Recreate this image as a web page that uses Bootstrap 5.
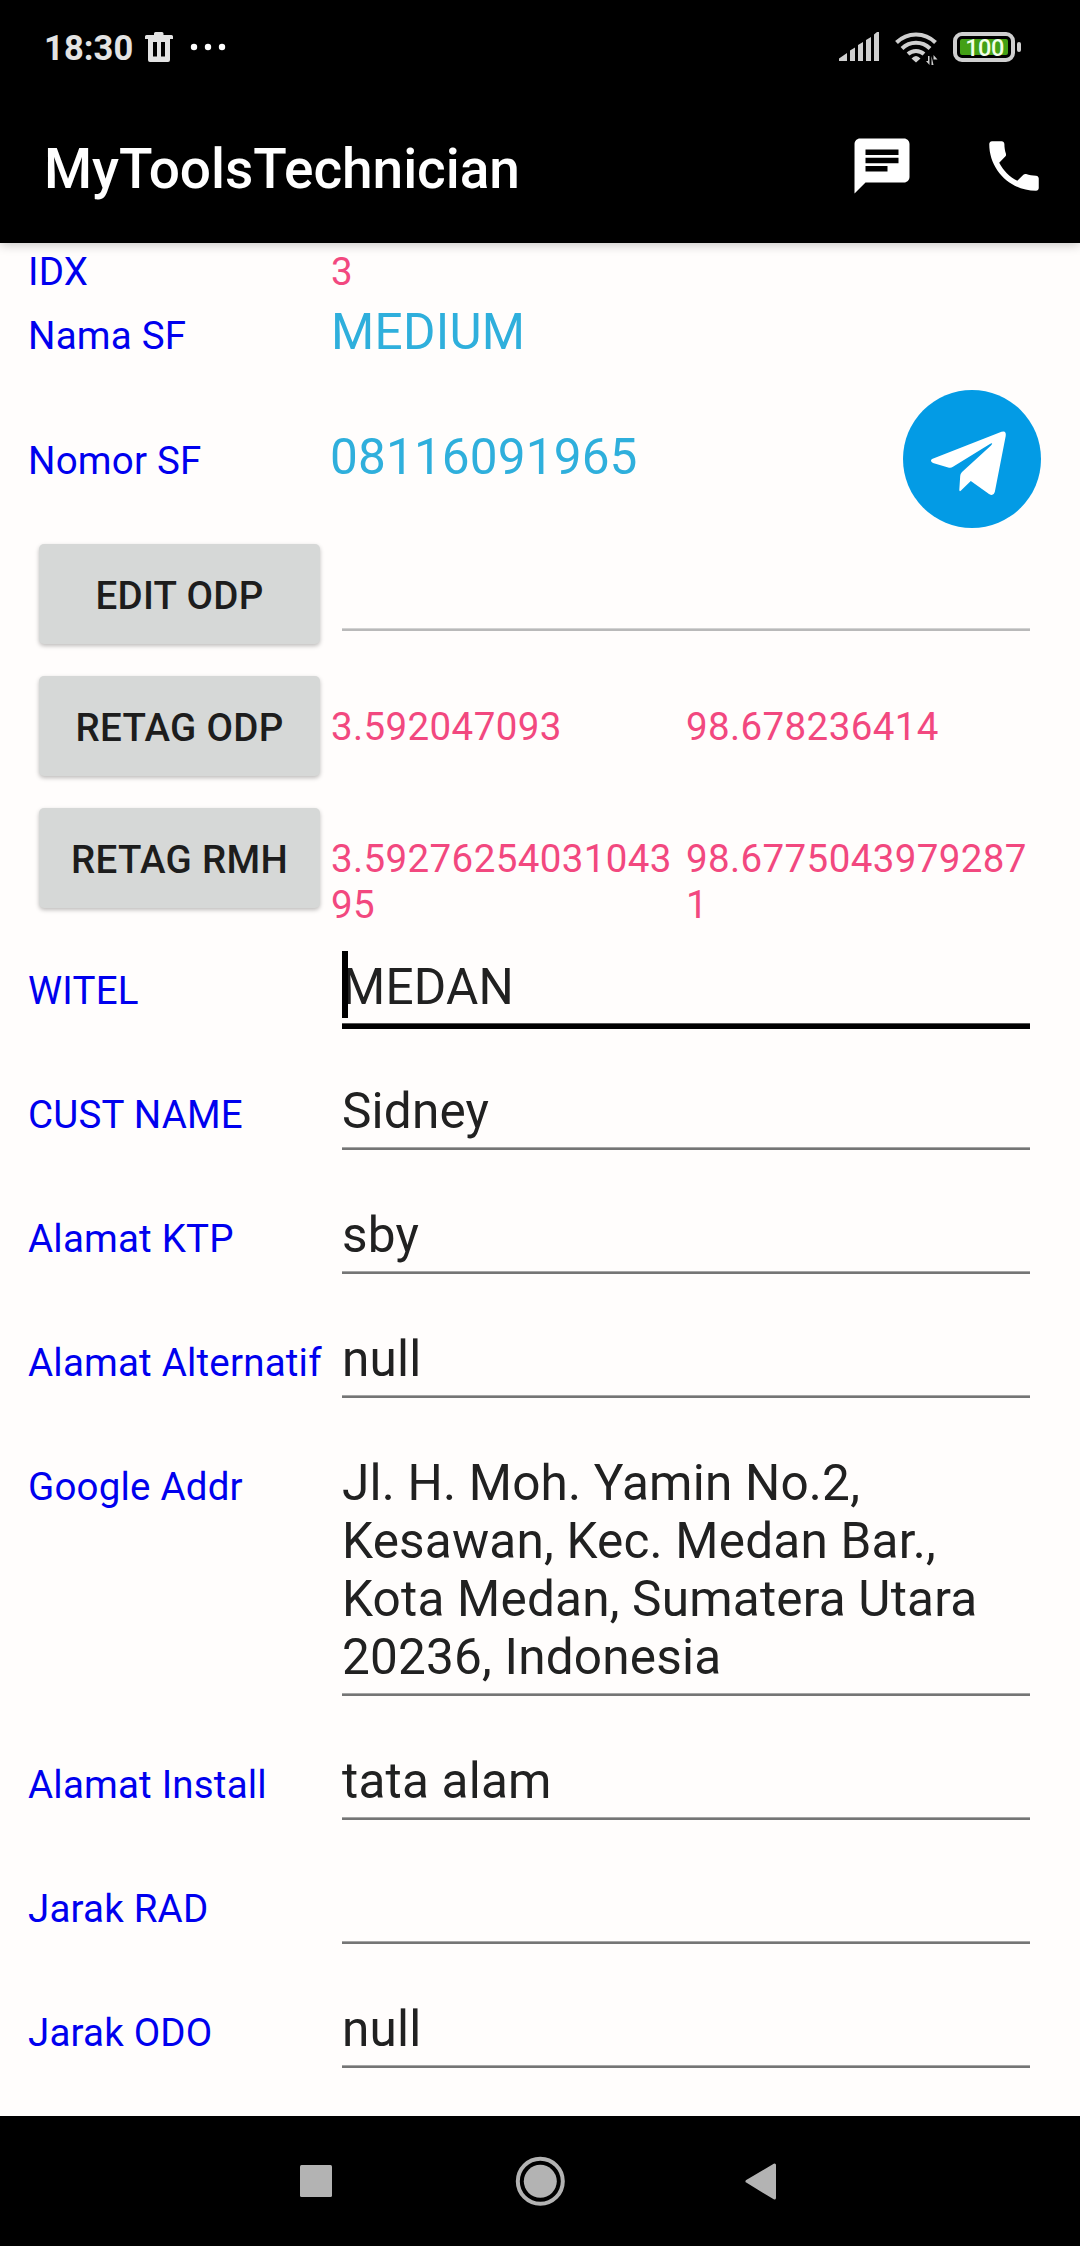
<!DOCTYPE html>
<html lang="id">
<head>
<meta charset="utf-8">
<meta name="viewport" content="width=device-width, initial-scale=1">
<title>MyToolsTechnician</title>
<link href="https://cdn.jsdelivr.net/npm/bootstrap@5.3.0/dist/css/bootstrap.min.css" rel="stylesheet">
<style>
body{font-family:Roboto,"Noto Sans",sans-serif;background:#fffdfc;width:1080px;height:2246px;overflow:hidden;font-size:38.5px;line-height:45px;color:#212121}
svg{display:block;flex:none}
.status-strip{height:90px;padding:0 59px 0 44px;background:#000;color:#e3e3e3}
.clock{font-size:34.5px;font-weight:700;line-height:40px;padding-top:28px;width:101px;letter-spacing:.1px}
.app-bar{height:153px;background:#000;color:#fff;padding:0 33px 0 44px;box-shadow:0 2px 10px rgba(0,0,0,.22);position:relative;z-index:1}
.app-title{font-size:55px;font-weight:500;line-height:64px;padding-top:47px;letter-spacing:-.06px}
.bar-icons{padding-top:43px;gap:66px}
.screen{height:1873px}
.form-line{padding-left:28px}
.field-name{width:303px;color:#00e;flex:none;white-space:nowrap;letter-spacing:.2px}
.pink{color:#f2487f;letter-spacing:.38px}
.sky{color:#2fafdc;font-size:49.5px;line-height:58px;letter-spacing:.28px}
.sky-number{letter-spacing:.14px;margin-left:-1px}
.coord{width:355px;line-height:46px;word-break:break-all;padding:44px 8px 0 0}
.r-idx{height:64px;padding-top:6px}
.r-nama{height:87px;margin-top:-4px}
.r-nomor{height:138px;padding-right:39px}
.nomor-text{padding-top:38px}
.r-btn{height:132px}
.r-last{height:145px}
.btn-col{width:303px;padding:16px 11px;flex:none}
.btn-droid{height:100px;border:0;border-radius:5px;background:#d6d8d7;color:#1d1d1d;font-size:38.5px;font-weight:500;line-height:45px;padding:2px 0 0;letter-spacing:.32px;box-shadow:0 2px 4px rgba(0,0,0,.26)}
.r-edit{padding-top:21px}
.entry{width:688px;margin-left:11px;margin-bottom:35px;padding-bottom:10px;font-size:49.5px;line-height:58px;letter-spacing:.2px;background:linear-gradient(#a5a5a5 1px,#757575 1px) bottom/100% 3px no-repeat}
.entry-hint{width:688px;height:103px;margin-left:11px;background:linear-gradient(#d2d2d2 1px,#b9b9b9 1px) bottom/100% 3px no-repeat}
.entry-focus{padding-bottom:13px;margin-bottom:32px;background:linear-gradient(#555 1px,#000 1px) bottom/100% 6px no-repeat}
.caret{position:absolute;left:0;top:-7px;width:6px;height:67px;background:#000}
.nav-strip{height:130px;background:#000}
</style>
</head>
<body>
<header>
<div class="status-strip d-flex">
 <div class="clock">18:30</div>
 <svg width="90" height="90" viewBox="145 0 90 90"><path fill="#e3e3e3" fill-rule="evenodd" d="M145 36.500Q145 35 146.500 35H154V33.500Q154 32 155.500 32H162Q163.500 32 163.500 33.500V35H171.500Q173 35 173 36.500V39H170V60Q170 62 168 62H150Q148 62 148 60V39H145ZM153 42V56.500H157V42ZM161 42V56.500H165V42Z"/><g fill="#fff"><circle cx="194" cy="47" r="3.200"/><circle cx="208" cy="47" r="3.200"/><circle cx="222" cy="47" r="3.200"/></g></svg>
 <svg class="ms-auto" width="182" height="90" viewBox="839 0 182 90" fill="#cfcfcf">
  <path d="M839 61V58.500L847 53V61ZM850 61V50.500L855 47.500V61ZM858 61V45L863 42V61ZM866 61V40L871 37V61ZM874 61V34.500L877 32H879V61Z"/>
  <g fill="none" stroke="#cfcfcf" stroke-width="4"><path d="M896.500 42.500A27.500 27.500 0 0 1 935.500 42.500"/><path d="M902 48.500A20 20 0 0 1 930 48.500"/><path d="M908 54A12 12 0 0 1 924 54"/></g>
  <path d="M911.500 58.500Q916 53.500 920.500 58.500L916 62.500ZM929.500 56V65L926 61H928V56ZM931.500 56V65H933.500V59.500H937.500L933.500 55V65"/>
  <rect x="955" y="34" width="58" height="26" rx="7" fill="none" stroke="#cfcfcf" stroke-width="4"/>
  <rect x="960" y="39" width="48" height="16" rx="2" fill="#43a015"/><rect x="1017" y="42" width="4" height="10" rx="2"/>
  <text x="984.500" y="56" fill="#f2ffe8" text-anchor="middle" font-family="Roboto" font-size="23.500" font-weight="500" letter-spacing="-.5">100</text>
 </svg>
</div>
<div class="app-bar d-flex justify-content-between">
 <div class="app-title">MyToolsTechnician</div>
 <div class="bar-icons d-flex">
  <svg width="66" height="66" viewBox="0 0 24 24" fill="#fff"><path d="M20 2H4c-1.100 0-1.990.9-1.990 2L2 22l4-4h14c1.100 0 2-.9 2-2V4c0-1.100-.9-2-2-2zM6 9h12v2H6V9zm8 5H6v-2h8v2zm4-6H6V6h12v2z"/></svg>
  <svg width="66" height="66" viewBox="0 0 24 24" fill="#fff"><path d="M6.620 10.790c1.440 2.830 3.760 5.140 6.590 6.590l2.200-2.200c.27-.27.67-.36 1.020-.24 1.120.37 2.330.57 3.570.57.55 0 1 .45 1 1V20c0 .55-.45 1-1 1-9.390 0-17-7.610-17-17 0-.55.45-1 1-1h3.500c.55 0 1 .45 1 1 0 1.250.2 2.450.57 3.570.11.350.03.740-.25 1.020l-2.200 2.200z"/></svg>
 </div>
</div>
</header>
<main class="screen">
 <div class="form-line r-idx d-flex align-items-baseline"><div class="field-name">IDX</div><div class="pink">3</div></div>
 <div class="form-line r-nama d-flex align-items-baseline"><div class="field-name">Nama SF</div><div class="sky">MEDIUM</div></div>
 <div class="form-line r-nomor d-flex justify-content-between">
  <div class="nomor-text d-flex align-items-baseline"><div class="field-name">Nomor SF</div><div class="sky sky-number">08116091965</div></div>
  <svg width="138" height="138" viewBox="0 0 138 138"><circle cx="69" cy="69" r="69" fill="#039be5"/><path fill="#fff" d="M29 69Q26.500 71 30 73L46 77.700Q48 78.300 50 76.800L86.500 54.200Q91 52 88 55.500L59 82Q57.200 84 57.200 86L56.300 100Q56.500 102 58 100.500L67.800 91L86 104Q90.500 106.500 91.800 102L102.700 46Q103.500 40 98.500 41.800Z"/></svg>
 </div>
 <div class="form-line r-btn d-flex"><div class="btn-col"><button class="btn btn-droid w-100">EDIT ODP</button></div><div class="entry-hint"></div></div>
 <div class="form-line r-btn d-flex"><div class="btn-col"><button class="btn btn-droid w-100">RETAG ODP</button></div><div class="coord pink">3.592047093</div><div class="coord pink">98.678236414</div></div>
 <div class="form-line r-last d-flex"><div class="btn-col"><button class="btn btn-droid w-100">RETAG RMH</button></div><div class="coord pink">3.5927625403104395</div><div class="coord pink">98.67750439792871</div></div>
 <div class="form-line r-edit d-flex align-items-baseline"><div class="field-name">WITEL</div><div class="entry entry-focus position-relative">MEDAN<span class="caret"></span></div></div>
 <div class="form-line r-edit d-flex align-items-baseline"><div class="field-name">CUST NAME</div><div class="entry">Sidney</div></div>
 <div class="form-line r-edit d-flex align-items-baseline"><div class="field-name">Alamat KTP</div><div class="entry">sby</div></div>
 <div class="form-line r-edit d-flex align-items-baseline"><div class="field-name">Alamat Alternatif</div><div class="entry">null</div></div>
 <div class="form-line r-edit d-flex align-items-baseline"><div class="field-name">Google Addr</div><div class="entry">Jl. H. Moh. Yamin No.2, Kesawan, Kec. Medan Bar., Kota Medan, Sumatera Utara 20236, Indonesia</div></div>
 <div class="form-line r-edit d-flex align-items-baseline"><div class="field-name">Alamat Install</div><div class="entry">tata alam</div></div>
 <div class="form-line r-edit d-flex align-items-baseline"><div class="field-name">Jarak RAD</div><div class="entry">&nbsp;</div></div>
 <div class="form-line r-edit d-flex align-items-baseline"><div class="field-name">Jarak ODO</div><div class="entry">null</div></div>
</main>
<footer class="nav-strip">
 <svg class="mx-auto" width="480" height="130" viewBox="300 2116 480 130" fill="#b3b3b3"><rect x="300" y="2165" width="32" height="32" rx="1.500"/><circle cx="540.300" cy="2181.300" r="22.500" fill="none" stroke="#b3b3b3" stroke-width="4"/><circle cx="540.300" cy="2181.300" r="16.500"/><path d="M747 2181.300L774.500 2165V2198Z" stroke="#b3b3b3" stroke-width="3" stroke-linejoin="round"/></svg>
</footer>
<script src="https://cdn.jsdelivr.net/npm/bootstrap@5.3.0/dist/js/bootstrap.bundle.min.js"></script>
</body>
</html>
